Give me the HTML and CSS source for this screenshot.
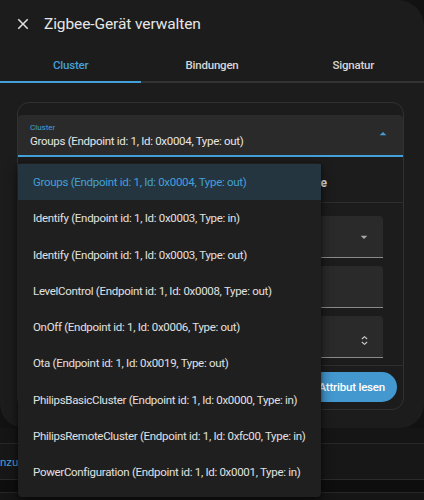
FILE: index.html
```html
<!DOCTYPE html>
<html lang="de">
<head>
<meta charset="utf-8">
<title>Zigbee-Gerät verwalten</title>
<link rel="stylesheet" href="styles.css">
</head>
<body>
<div class="dialog">
  <header class="dialog-header">
    <button class="icon-btn" aria-label="Schließen">
      <svg viewBox="0 0 24 24" width="18" height="18"><path fill="#e1e1e1" d="M19 6.41L17.59 5 12 10.59 6.41 5 5 6.41 10.59 12 5 17.59 6.41 19 12 13.41 17.59 19 19 17.59 13.41 12z"/></svg>
    </button>
    <h1 class="title">Zigbee-Gerät verwalten</h1>
  </header>

  <nav class="tabs">
    <div class="tab active">Cluster</div>
    <div class="tab">Bindungen</div>
    <div class="tab">Signatur</div>
  </nav>

  <div class="content">
    <section class="card">
      <div class="select open">
        <div class="select-text">
          <span class="select-label">Cluster</span>
          <span class="select-value">Groups (Endpoint id: 1, Id: 0x0004, Type: out)</span>
        </div>
        <svg class="select-arrow" viewBox="0 0 24 24" width="16" height="16"><path fill="#44a0d9" d="M7 14l5-5 5 5z"/></svg>
      </div>

      <div class="attr-head"><span>Cluster-Attribute</span></div>

      <div class="fields">
        <div class="field">
          <svg class="field-icon" viewBox="0 0 24 24" width="16" height="16"><path fill="#a8a8a8" d="M7 10l5 5 5-5z"/></svg>
        </div>
        <div class="field"></div>
        <div class="field">
          <svg class="field-icon" viewBox="0 0 12 14" width="9" height="11"><polyline points="2.5,5 6,1.8 9.5,5" fill="none" stroke="#d0d0d0" stroke-width="1.4"/><polyline points="2.5,9 6,12.2 9.5,9" fill="none" stroke="#d0d0d0" stroke-width="1.4"/></svg>
        </div>
      </div>

      <div class="card-actions">
        <button class="btn">Attribut lesen</button>
      </div>
    </section>
  </div>

  <ul class="menu">
    <li class="menu-item selected">Groups (Endpoint id: 1, Id: 0x0004, Type: out)</li>
    <li class="menu-item">Identify (Endpoint id: 1, Id: 0x0003, Type: in)</li>
    <li class="menu-item">Identify (Endpoint id: 1, Id: 0x0003, Type: out)</li>
    <li class="menu-item">LevelControl (Endpoint id: 1, Id: 0x0008, Type: out)</li>
    <li class="menu-item">OnOff (Endpoint id: 1, Id: 0x0006, Type: out)</li>
    <li class="menu-item">Ota (Endpoint id: 1, Id: 0x0019, Type: out)</li>
    <li class="menu-item">PhilipsBasicCluster (Endpoint id: 1, Id: 0x0000, Type: in)</li>
    <li class="menu-item">PhilipsRemoteCluster (Endpoint id: 1, Id: 0xfc00, Type: in)</li>
    <li class="menu-item">PowerConfiguration (Endpoint id: 1, Id: 0x0001, Type: in)</li>
  </ul>
</div>

<div class="page-below">
  <div class="below-gap"></div>
  <div class="below-row"><span class="below-link">Hinzufügen</span></div>
  <div class="below-band"></div>
</div>
</body>
</html>
```

FILE: styles.css
```css
* { box-sizing: border-box; }

body {
  margin: 0;
  background: #121212;
  font-family: Roboto, "Noto Sans", sans-serif;
  color: #e1e1e1;
  overflow: hidden;
}

/* dialog surface */
.dialog {
  position: relative;
  height: 428px;
  background: #1c1c1c;
  border-radius: 0 26px 24px 24px;
}

.dialog-header {
  height: 47px;
  display: flex;
  align-items: center;
  padding-left: 14px;
}

.icon-btn {
  width: 18px;
  height: 18px;
  padding: 0;
  border: 0;
  background: none;
  display: flex;
}

.title {
  margin: 0 0 0 12px;
  font-size: 15.5px;
  letter-spacing: -0.1px;
  font-weight: 400;
  color: #e6e6e6;
}

/* tabs */
.tabs {
  display: grid;
  grid-template-columns: repeat(3, 1fr);
}

.tab {
  height: 36px;
  display: flex;
  align-items: center;
  justify-content: center;
  padding-top: 2px;
  font-size: 11.5px;
  letter-spacing: -0.2px;
  font-weight: 500;
  color: #d6d6d6;
  border-bottom: 2px solid #333;
}

.tab.active {
  color: #44a0d9;
  border-bottom-color: #44a0d9;
}

.content {
  padding: 19px 20px 0 17px;
}

/* card */
.card {
  height: 308px;
  border: 1px solid #313131;
  border-radius: 12px;
  padding-top: 12px;
}

.select {
  height: 42px;
  background: #2a2a2a;
  border-radius: 4px 4px 0 0;
  border-bottom: 2px solid #44a0d9;
  display: flex;
  align-items: center;
  padding: 2px 12px 0 12px;
}

.select-text {
  flex: 1;
  display: flex;
  flex-direction: column;
}

.select-label {
  font-size: 8px;
  color: #44a0d9;
  line-height: 11px;
}

.select-value {
  font-size: 11.5px;
  letter-spacing: -0.3px;
  line-height: 17px;
  color: #e6e6e6;
}

.select-arrow {
  margin-top: -4px;
}

.attr-head {
  height: 46px;
  padding: 6px 0 0 0;
  display: flex;
  align-items: center;
  border-bottom: 1px solid #2e2e2e;
}

.attr-head span {
  width: 309px;
  text-align: right;
  font-size: 12px;
  font-weight: 700;
  color: #e1e1e1;
}

.fields {
  padding: 13px 20px 7px 36px;
  display: flex;
  flex-direction: column;
  gap: 8px;
  border-bottom: 1px solid #2e2e2e;
}

.field {
  height: 42px;
  background: #2a2a2a;
  border-radius: 4px 4px 0 0;
  border-bottom: 1px solid #8a8a8a;
  display: flex;
  align-items: center;
  justify-content: flex-end;
  padding-right: 11px;
}

.field:last-child .field-icon {
  margin-top: 8px;
  margin-right: 3px;
}

.card-actions {
  display: flex;
  justify-content: flex-end;
  padding: 6px 6px 0 0;
}

.btn {
  height: 30px;
  padding: 0 12px 0 24px;
  border: 0;
  border-radius: 15px;
  background: #4298cf;
  color: #fff;
  font-family: inherit;
  font-size: 11.5px;
  letter-spacing: -0.2px;
  font-weight: 500;
}

/* open dropdown list */
.menu {
  position: absolute;
  left: 18px;
  top: 163px;
  width: 303px;
  height: 334px;
  margin: 0;
  padding: 1px 0 0;
  list-style: none;
  background: #1f1f1f;
  border-radius: 4px;
  box-shadow: 0 5px 12px rgba(0, 0, 0, 0.55), 0 0 3px rgba(0, 0, 0, 0.4);
}

.menu-item {
  height: 36.25px;
  display: flex;
  align-items: center;
  padding-left: 15px;
  font-size: 11.5px;
  letter-spacing: -0.3px;
  color: #e1e1e1;
  white-space: nowrap;
}

.menu-item.selected {
  background: #25353f;
  color: #44a0d9;
}

/* page behind the dialog */
.page-below {
  height: 72px;
  background: #151515;
}

.below-gap {
  height: 15px;
}

.below-row {
  height: 36px;
  border-top: 1px solid #282828;
  display: flex;
  align-items: center;
  background: #171717;
}

.below-link {
  margin-left: -11px;
  font-size: 11.5px;
  color: #44a0d9;
}

.below-band {
  height: 14px;
  border-top: 1px solid #2a2a2a;
  border-bottom: 1px solid #262626;
  background: #0e0e0e;
}
```
